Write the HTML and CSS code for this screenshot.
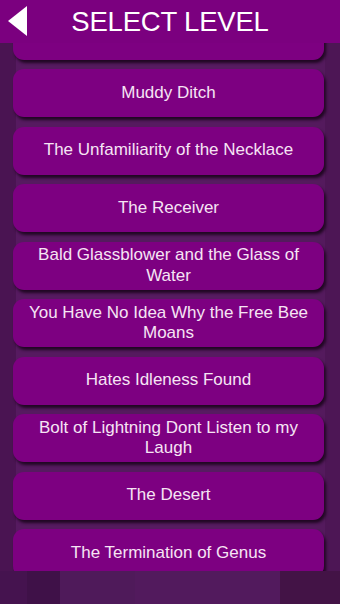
FILE: index.html
```html
<!DOCTYPE html>
<html>
<head>
<meta charset="utf-8">
<link rel="stylesheet" href="styles.css">
</head>
<body>
<div class="screen">
  <header class="topbar">
    <svg class="back" width="22" height="32" viewBox="0 0 22 32"><polygon points="1,16 20,1 20,31" fill="#ffffff"/></svg>
    <h1 class="title">SELECT LEVEL</h1>
  </header>
  <main class="list">
    <div class="level level-partial"></div>
    <div class="level">Muddy Ditch</div>
    <div class="level">The Unfamiliarity of the Necklace</div>
    <div class="level">The Receiver</div>
    <div class="level">Bald Glassblower and the Glass of Water</div>
    <div class="level">You Have No Idea Why the Free Bee Moans</div>
    <div class="level">Hates Idleness Found</div>
    <div class="level">Bolt of Lightning Dont Listen to my Laugh</div>
    <div class="level">The Desert</div>
    <div class="level">The Termination of Genus</div>
  </main>
  <footer class="footer"></footer>
</div>
</body>
</html>
```

FILE: styles.css
```css
* { box-sizing: border-box; }
html, body { margin: 0; padding: 0; }
body {
  width: 340px;
  height: 604px;
  overflow: hidden;
  font-family: "Liberation Sans", Arial, sans-serif;
  background: #4f1a59;
}
.screen {
  display: flex;
  flex-direction: column;
  height: 604px;
}
.topbar {
  height: 43px;
  flex: 0 0 43px;
  background: #7b007f;
  display: flex;
  align-items: center;
  position: relative;
}
.back {
  position: absolute;
  left: 7px;
  top: 5px;
}
.title {
  margin: 0;
  width: 100%;
  text-align: center;
  color: #ffffff;
  font-size: 27.5px;
  font-weight: normal;
  letter-spacing: -0.2px;
  line-height: 42px;
}
.list {
  flex: 0 0 528px;
  height: 528px;
  overflow: hidden;
  display: flex;
  flex-direction: column;
  gap: 9.5px;
  padding: 0 16px 0 13px;
  background: linear-gradient(90deg,
    #4a1452 0px, #4a1452 16px,
    #561a60 16px, #561a60 60px,
    #551a5e 60px, #551a5e 150px,
    #571b61 150px, #571b61 260px,
    #541a5d 260px, #541a5d 325px,
    #4d1655 325px, #4d1655 340px);
}
.level {
  flex: 0 0 48px;
  height: 48px;
  border-radius: 11px;
  background: #7d0081;
  color: #f6e4f4;
  font-size: 17px;
  line-height: 20.5px;
  display: flex;
  align-items: center;
  justify-content: center;
  text-align: center;
  padding: 0 14px;
  box-shadow: 2px 3px 3px rgba(15, 0, 15, 0.75);
}
.level-partial {
  margin-top: -31.5px;
}
.footer {
  flex: 1 1 auto;
  background: linear-gradient(90deg,
    #45134f 0px, #45134f 27px,
    #3f1148 27px, #3f1148 60px,
    #4f1a5a 60px, #4f1a5a 135px,
    #521a5d 135px, #521a5d 280px,
    #431346 280px, #431346 340px);
}
```
